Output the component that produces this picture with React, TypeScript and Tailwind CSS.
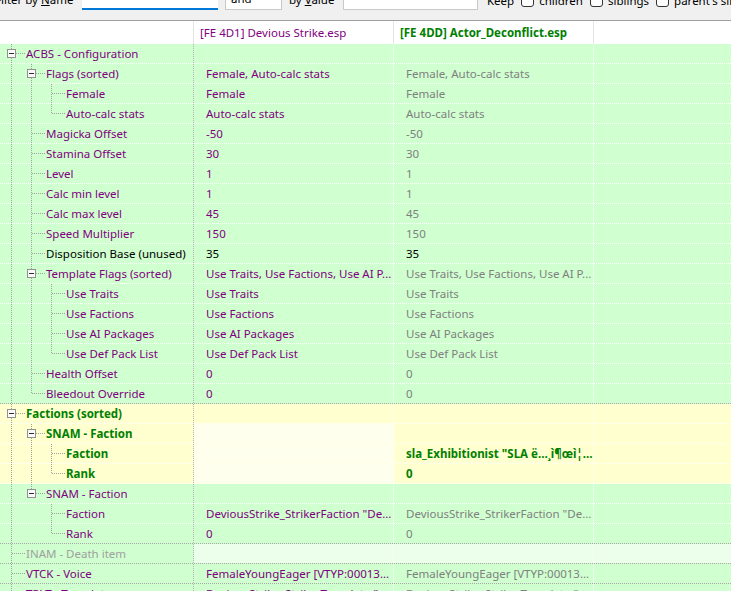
import React from "react"

type Kind = "normal" | "black" | "fac" | "inam"

type Row = {
  name: string
  tree: string
  box?: boolean
  v1?: string
  v2?: string
  kind?: Kind
  lightV1?: boolean
}

const rows: Row[] = [
  { name: "ACBS - Configuration", tree: "T", box: true },
  { name: "Flags (sorted)", tree: "|T", box: true, v1: "Female, Auto-calc stats", v2: "Female, Auto-calc stats" },
  { name: "Female", tree: "||T", v1: "Female", v2: "Female" },
  { name: "Auto-calc stats", tree: "||L", v1: "Auto-calc stats", v2: "Auto-calc stats" },
  { name: "Magicka Offset", tree: "|T", v1: "-50", v2: "-50" },
  { name: "Stamina Offset", tree: "|T", v1: "30", v2: "30" },
  { name: "Level", tree: "|T", v1: "1", v2: "1" },
  { name: "Calc min level", tree: "|T", v1: "1", v2: "1" },
  { name: "Calc max level", tree: "|T", v1: "45", v2: "45" },
  { name: "Speed Multiplier", tree: "|T", v1: "150", v2: "150" },
  { name: "Disposition Base (unused)", tree: "|T", v1: "35", v2: "35", kind: "black" },
  { name: "Template Flags (sorted)", tree: "|T", box: true, v1: "Use Traits, Use Factions, Use AI P...", v2: "Use Traits, Use Factions, Use AI P..." },
  { name: "Use Traits", tree: "||T", v1: "Use Traits", v2: "Use Traits" },
  { name: "Use Factions", tree: "||T", v1: "Use Factions", v2: "Use Factions" },
  { name: "Use AI Packages", tree: "||T", v1: "Use AI Packages", v2: "Use AI Packages" },
  { name: "Use Def Pack List", tree: "||L", v1: "Use Def Pack List", v2: "Use Def Pack List" },
  { name: "Health Offset", tree: "|T", v1: "0", v2: "0" },
  { name: "Bleedout Override", tree: "|L", v1: "0", v2: "0" },
  { name: "Factions (sorted)", tree: "T", box: true, kind: "fac" },
  { name: "SNAM - Faction", tree: "|T", box: true, kind: "fac", lightV1: true },
  { name: "Faction", tree: "||T", kind: "fac", lightV1: true, v2: "sla_Exhibitionist \"SLA ë…¸ì¶œì¦…" },
  { name: "Rank", tree: "||L", kind: "fac", lightV1: true, v2: "0" },
  { name: "SNAM - Faction", tree: "|L", box: true },
  { name: "Faction", tree: "| T", v1: "DeviousStrike_StrikerFaction \"De...", v2: "DeviousStrike_StrikerFaction \"De..." },
  { name: "Rank", tree: "| L", v1: "0", v2: "0" },
  { name: "INAM - Death item", tree: "T", kind: "inam" },
  { name: "VTCK - Voice", tree: "T", v1: "FemaleYoungEager [VTYP:00013...", v2: "FemaleYoungEager [VTYP:00013..." },
  { name: "TPLT - Template", tree: "T", v1: "DeviousStrike_StrikerTemplate \"...", v2: "DeviousStrike_StrikerTemplate \"..." },
]

function TreeLines({ tree, box }: { tree: string; box?: boolean }) {
  const level = tree.length - 1
  const w = 26 + level * 20
  const dot = { stroke: "#a0a0a0", strokeWidth: 1, strokeDasharray: "1 1" }
  return (
    <svg width={w} height={19} className="shrink-0" shapeRendering="crispEdges">
      {tree.split("").map((c, i) => {
        const x = 11.5 + i * 20
        if (c === "|") return <line key={i} x1={x} y1={0} x2={x} y2={19} {...dot} />
        if (c === "T" || c === "L")
          return (
            <g key={i}>
              <line x1={x} y1={0} x2={x} y2={c === "T" ? 19 : 10} {...dot} />
              <line x1={x} y1={9.5} x2={x + 13} y2={9.5} {...dot} />
            </g>
          )
        return null
      })}
      {box && (
        <g>
          <rect x={7.5 + level * 20} y={5.5} width={8} height={8} fill="#fafafa" stroke="#919191" />
          <line x1={9 + level * 20} y1={9.5} x2={14 + level * 20} y2={9.5} stroke="#2b2b2b" />
        </g>
      )}
    </svg>
  )
}

function DataRow({ row, next }: { row: Row; next?: Row }) {
  const kind = row.kind ?? "normal"
  const bg = kind === "fac" ? "bg-[#ffffd0]" : "bg-[#d0ffd0]"
  const sep = next && next.tree.length === 1 ? "border-[#a8a8a8]" : "border-white"
  const nameColor =
    kind === "black" ? "text-black" : kind === "fac" ? "text-[#008000] font-bold" : kind === "inam" ? "text-[#a0a0a0]" : "text-[#800080]"
  const v1Color = kind === "black" ? "text-black" : "text-[#800080]"
  const v2Color = kind === "black" ? "text-black" : kind === "fac" ? "text-[#008000] font-bold" : "text-[#808080]"
  const v1bg = row.lightV1 ? "bg-[#ffffee]" : kind === "inam" ? "bg-[#ebffeb]" : ""
  const restBg = kind === "inam" ? "bg-[#ebffeb]" : ""
  return (
    <div className={`flex h-[20px] border-b border-dotted ${sep} ${bg}`}>
      <div className="flex w-[194px] shrink-0 items-center overflow-hidden border-r border-dotted border-[#b4b4b4]">
        <TreeLines tree={row.tree} box={row.box} />
        <span className={`whitespace-nowrap leading-[19px] ${nameColor}`}>{row.name}</span>
      </div>
      <div className={`w-[200px] shrink-0 overflow-hidden whitespace-nowrap border-r border-dotted border-white pl-[12px] leading-[19px] ${v1Color} ${v1bg}`}>
        {row.v1}
      </div>
      <div className={`w-[200px] shrink-0 overflow-hidden whitespace-nowrap border-r border-dotted border-white pl-[12px] leading-[19px] ${v2Color} ${restBg}`}>
        {row.v2}
      </div>
      <div className={`flex-1 ${restBg}`} />
    </div>
  )
}

function Check({ label }: { label: string }) {
  return (
    <div className="flex shrink-0 items-center gap-[5px]">
      <span className="h-[13px] w-[13px] shrink-0 rounded-[3px] border border-[#333] bg-white" />
      <span className="shrink-0">{label}</span>
    </div>
  )
}

export default function App() {
  return (
    <div
      className="h-[591px] w-[731px] overflow-hidden bg-white text-[11.5px] text-black"
      style={{ fontFamily: '"Noto Sans", "Open Sans", sans-serif' }}
    >
      <div className="h-[21px] overflow-hidden border-b border-[#a0a0a0] bg-[#f0f0f0]">
        <div className="-mt-[11px] flex h-[21px] items-end whitespace-nowrap">
          <span className="-ml-[5px] mb-[2px] w-[87px] shrink-0">
            Filter by <u>N</u>ame
          </span>
          <span className="h-[21px] w-[136px] shrink-0 border-b-2 border-[#0078d7] bg-white" />
          <span className="ml-[7px] flex h-[21px] w-[57px] shrink-0 items-end border border-[#c8c8c8] bg-white pb-[2px] pl-[5px]">and</span>
          <span className="mb-[2px] ml-[7px] w-[54px] shrink-0">
            by <u>V</u>alue
          </span>
          <span className="h-[21px] w-[135px] shrink-0 border border-[#c8c8c8] bg-white" />
          <div className="mb-[1px] ml-[9px] flex shrink-0 items-center gap-[7px]">
            <span className="shrink-0">Keep</span>
            <Check label="children" />
            <Check label="siblings" />
            <Check label="parent's siblings" />
          </div>
        </div>
      </div>
      <div className="flex h-[23px] items-center bg-white">
        <div className="h-full w-[194px] shrink-0 border-r border-[#e5e5e5]" />
        <div className="flex h-full w-[200px] shrink-0 items-center border-r border-[#e5e5e5] pl-[6px] text-[#800080]">
          [FE 4D1] Devious Strike.esp
        </div>
        <div className="flex h-full w-[200px] shrink-0 items-center border-r border-[#e5e5e5] pl-[6px] font-bold text-[#008000]">
          [FE 4DD] Actor_Deconflict.esp
        </div>
        <div className="flex-1" />
      </div>
      {rows.map((r, i) => (
        <DataRow key={i} row={r} next={rows[i + 1]} />
      ))}
    </div>
  )
}
